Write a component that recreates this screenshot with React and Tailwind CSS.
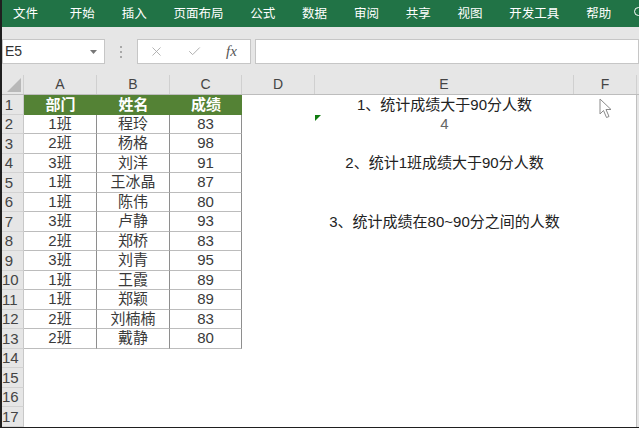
import React from "react";
import { X, Check } from "lucide-react";

const menu = ["文件", "开始", "插入", "页面布局", "公式", "数据", "审阅", "共享", "视图", "开发工具", "帮助"];

// column letter + width class
const cols = [
  { k: "A", w: "w-[73px]" },
  { k: "B", w: "w-[73px]" },
  { k: "C", w: "w-[72px]" },
  { k: "D", w: "w-[73px]" },
  { k: "E", w: "w-[259px]" },
  { k: "F", w: "w-[63px]" },
];

const data = [
  ["1班", "程玲", 83],
  ["2班", "杨格", 98],
  ["3班", "刘洋", 91],
  ["1班", "王冰晶", 87],
  ["1班", "陈伟", 80],
  ["3班", "卢静", 93],
  ["2班", "郑桥", 83],
  ["3班", "刘青", 95],
  ["1班", "王霞", 89],
  ["1班", "郑颖", 89],
  ["2班", "刘楠楠", 83],
  ["2班", "戴静", 80],
];

// notes in column E, keyed by row number
const notes = {
  1: "1、统计成绩大于90分人数",
  2: "4",
  4: "2、统计1班成绩大于90分人数",
  7: "3、统计成绩在80~90分之间的人数",
};

function TableCell({ row, ci, children }) {
  if (row === 1) {
    return (
      <div className={`${cols[ci].w} h-full flex items-center justify-center bg-[#548235] text-white font-bold`}>
        {children}
      </div>
    );
  }
  return (
    <div
      className={`${cols[ci].w} h-full flex items-center justify-center bg-white text-[#3a3a3a] border-r border-b border-r-[#8e8e8e] border-b-[#bcbcbc]`}
    >
      {children}
    </div>
  );
}

function SheetRow({ n }) {
  const inTable = n <= 13;
  const d = n >= 2 && n <= 13 ? data[n - 2] : null;
  const note = notes[n];
  return (
    <div className="flex h-[19.5px] text-[15px]">
      <div className="w-[22px] h-full bg-[#e6e6e6] border-b border-r border-b-[#d2d2d2] border-r-[#c8c8c8] flex items-center text-[#444]">
        <span className="w-[14px] text-center leading-none whitespace-nowrap">{n}</span>
      </div>
      {inTable ? (
        <>
          <TableCell row={n} ci={0}>{n === 1 ? "部门" : d[0]}</TableCell>
          <TableCell row={n} ci={1}>{n === 1 ? "姓名" : d[1]}</TableCell>
          <TableCell row={n} ci={2}>{n === 1 ? "成绩" : d[2]}</TableCell>
        </>
      ) : (
        <div className="w-[218px] h-full bg-white" />
      )}
      <div className="w-[73px] h-full bg-white" />
      <div className="w-[259px] h-full bg-white relative flex items-center justify-center whitespace-nowrap">
        {n === 2 && (
          <svg className="absolute left-0 top-0" width="6" height="6" viewBox="0 0 6 6">
            <polygon points="0,0 6,0 0,6" fill="#107c10" />
          </svg>
        )}
        {note && (
          <span className={n === 2 ? "text-[#666]" : "text-[#222]"}>{note}</span>
        )}
      </div>
      <div className="w-[63px] h-full bg-white border-r border-[#c0c0c0]" />
    </div>
  );
}

export default function App() {
  const rows = Array.from({ length: 17 }, (_, i) => i + 1);
  return (
    <div className="w-[639px] h-[428px] overflow-hidden relative bg-[#e6e6e6] border-l-2 border-b border-[#1f1f1f] font-['Liberation_Sans','Noto_Sans_CJK_SC',sans-serif]">
      {/* ribbon tabs */}
      <div className="h-[27px] bg-[#217346] flex items-center pl-[11px] gap-[26.8px] text-white text-[12.5px] font-['Noto_Sans_CJK_SC',sans-serif] relative overflow-hidden">
        {menu.map((m, i) => (
          <span key={m} className={i === 0 ? "mr-[5px] leading-none" : "leading-none"}>
            {m}
          </span>
        ))}
        <span className="absolute left-[632px] top-[7px] w-[9px] h-[9px] rounded-full border border-white" />
      </div>

      {/* formula bar */}
      <div className="h-[48px] pt-[12px] flex items-start">
        <div className="w-[103px] h-[25px] bg-white border border-[#c6c6c6] flex items-center justify-between pl-[2px] pr-[7px]">
          <span className="text-[14px] text-[#333]">E5</span>
          <svg width="7" height="4" viewBox="0 0 7 4">
            <polygon points="0,0 7,0 3.5,4" fill="#777" />
          </svg>
        </div>
        <div className="w-[32px] h-[25px] flex flex-col items-center justify-center gap-[3px]">
          <span className="w-[2px] h-[2px] bg-[#a8a8a8]" />
          <span className="w-[2px] h-[2px] bg-[#a8a8a8]" />
          <span className="w-[2px] h-[2px] bg-[#a8a8a8]" />
        </div>
        <div className="w-[114px] h-[25px] bg-white border border-[#c6c6c6] flex items-center pl-[11px]">
          <X size={15} strokeWidth={1.4} className="text-[#a9a9a9]" />
          <Check size={15} strokeWidth={1.6} className="text-[#b0b0b0] ml-[23px]" />
          <span className="ml-[24px] italic text-[15px] text-[#555] font-['Liberation_Serif',serif]">fx</span>
        </div>
        <div className="flex-1 ml-[4px] h-[25px] bg-white border border-[#c6c6c6]" />
      </div>

      {/* column headers */}
      <div className="flex h-[20px] border-b border-[#bdbdbd] text-[14px] text-[#444]">
        <div className="w-[22px] h-full flex items-end justify-end pr-[2px] pb-[2px] border-r border-[#d0d0d0]">
          <svg width="14" height="14" viewBox="0 0 14 14">
            <polygon points="14,0 14,14 0,14" fill="#b8b8b8" />
          </svg>
        </div>
        {cols.map((c) => (
          <div key={c.k} className={`${c.w} h-full flex items-center justify-center border-r border-[#d0d0d0]`}>
            {c.k}
          </div>
        ))}
      </div>

      {/* grid */}
      <div>
        {rows.map((n) => (
          <SheetRow key={n} n={n} />
        ))}
      </div>

      {/* mouse pointer */}
      <svg className="absolute left-[597px] top-[98px]" width="14" height="21" viewBox="0 0 14 21">
        <path d="M1 1 L1 16 L4.5 12.5 L7.5 19.5 L10 18.5 L7 11.5 L12 11.5 Z" fill="#fff" stroke="#8a8a8a" strokeWidth="1" strokeLinejoin="round" />
      </svg>
    </div>
  );
}
